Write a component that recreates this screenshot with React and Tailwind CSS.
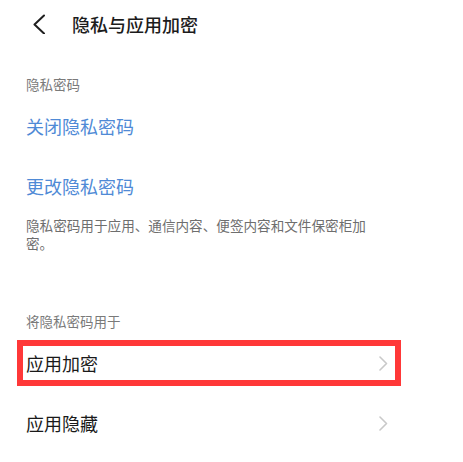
import { ChevronLeft } from 'lucide-react';

const font = { fontFamily: '"Noto Sans CJK SC", "Noto Sans", sans-serif' };

function Chevron() {
  return (
    <svg width="9" height="15" viewBox="0 0 9 15" fill="none" className="shrink-0">
      <path d="M1 1l6.5 6.5L1 14" stroke="#c9c9c9" strokeWidth="1.6" strokeLinecap="round" strokeLinejoin="round" />
    </svg>
  );
}

export default function App() {
  return (
    <div className="w-[463px] h-[462px] bg-white overflow-hidden" style={font}>
      {/* Header */}
      <header className="h-[48px] flex items-center">
        <svg width="14" height="20" viewBox="0 0 14 20" fill="none" className="ml-[32px]">
          <path d="M12 1.5L2.5 10.5L12 19.5" stroke="#1f1f1f" strokeWidth="2" strokeLinecap="round" strokeLinejoin="round" />
        </svg>
        <h1 className="ml-[26px] text-[18px] font-medium text-[#1c1c1c] tracking-[0px]">隐私与应用加密</h1>
      </header>

      <div className="pl-[26px] pr-[75px]">
        {/* 隐私密码 */}
        <div className="mt-[24px] h-[24px] flex items-center text-[13.5px] text-[#7a7a7a]">隐私密码</div>
        <div className="h-[60px] flex items-center text-[18px] text-[#4f8ad6]">关闭隐私密码</div>
        <div className="h-[60px] flex items-center text-[18px] text-[#4f8ad6]">更改隐私密码</div>
        <p className="w-[350px] text-[13.6px] leading-[18px] text-[#6e6e6e]">
          隐私密码用于应用、通信内容、便签内容和文件保密柜加密。
        </p>

        {/* 将隐私密码用于 */}
        <div className="mt-[57px] h-[24px] flex items-center text-[13.5px] text-[#7a7a7a]">将隐私密码用于</div>
        <div className="relative h-[60px] flex items-center justify-between">
          <span className="text-[18px] text-[#1a1a1a]">应用加密</span>
          <Chevron />
          <div className="absolute left-[-9px] top-[7px] w-[384px] h-[46px] border-[6px] border-[#ff3838]" />
        </div>
        <div className="h-[60px] flex items-center justify-between">
          <span className="text-[18px] text-[#1a1a1a]">应用隐藏</span>
          <Chevron />
        </div>
      </div>
    </div>
  );
}
